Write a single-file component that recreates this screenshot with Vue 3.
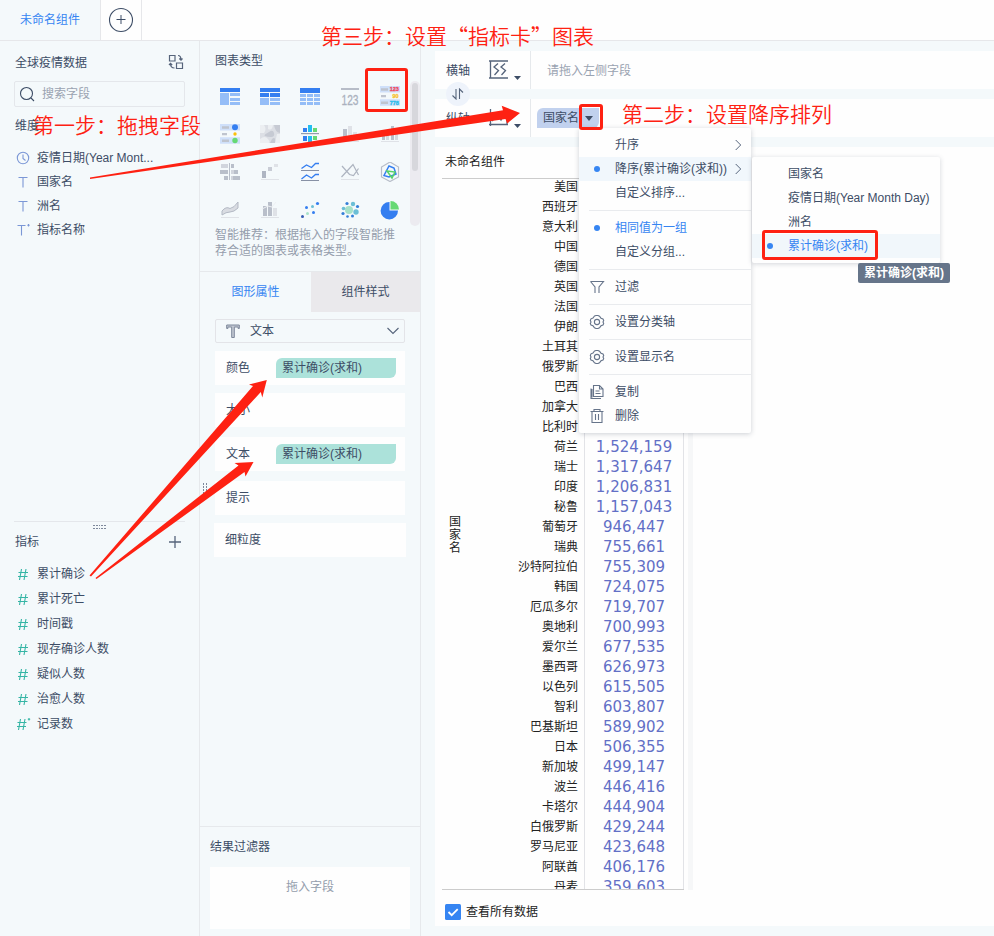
<template>
  <div class="app">
    <header class="tabs">
      <div class="tab">未命名组件</div>
      <div class="tab-add">
        <svg width="26" height="26" viewBox="0 0 26 26" fill="none" stroke="#3d4d66">
          <circle cx="13" cy="13" r="11.5" stroke-width="1.1" />
          <path d="M8.5 12.5h9M13 8v9" />
        </svg>
      </div>
    </header>

    <div class="main">
      <aside class="fields">
        <div class="fields-head">
          <span>全球疫情数据</span>
          <svg width="16" height="16" viewBox="0 0 16 16" fill="none" stroke="#56647b" stroke-width="1.2">
            <path d="M1.5 1.5h5.5v5.5h-5.5zM8.5 9h6v5.5h-6zM10 1.5q3 0 3 4.500M11.300 4.500l1.700 1.700 1.500-1.700M2.500 9.500q0 4.500 4 4.500M1 11l1.500-1.700 1.700 1.700" />
          </svg>
        </div>
        <div class="search">
          <svg width="16" height="16" viewBox="0 0 16 16" fill="none" stroke="#3d4d66" stroke-width="1.1">
            <circle cx="7.500" cy="7.500" r="6" /><path d="M12 12l3 3" />
          </svg>
          <span>搜索字段</span>
        </div>
        <div class="group-title">维度</div>
        <ul class="dims">
          <li v-for="d in dimensions" :key="d.name">
            <svg width="16" height="16" viewBox="0 0 16 16" fill="none" stroke="#7b97d6" stroke-width="1.1">
              <template v-if="d.type === 'date'">
                <circle cx="8" cy="8" r="5.700" /><path d="M8 4.500v4l2.500 2" />
              </template>
              <template v-else-if="d.type === 'text'"><path d="M3.500 3.500h9M8 3.500v10" /></template>
              <template v-else><path d="M2.500 3.500h8M6.500 3.500v10M13.500 2v2.500M12.300 3.200h2.400" /></template>
            </svg>
            <span>{{ d.name }}</span>
          </li>
        </ul>
        <div class="metrics-head">
          <svg class="grip" width="14" height="5" viewBox="0 0 14 5" fill="#7d889b">
            <path d="M0 0h2v1H0zM3 0h2v1H3zM6 0h1v1H6zM8 0h2v1H8zM11 0h2v1h-2zM0 3h2v1H0zM3 3h2v1H3zM6 3h1v1H6zM8 3h2v1H8zM11 3h2v1h-2z" />
          </svg>
          <span>指标</span>
          <svg width="12" height="12" viewBox="0 0 12 12" stroke="#56647b" stroke-width="1.300"><path d="M0 6h12M6 0v12" /></svg>
        </div>
        <ul class="metrics">
          <li v-for="(m, i) in metrics" :key="m">
            <svg width="16" height="16" viewBox="0 0 16 16" fill="none" stroke="#35b5a5" stroke-width="1.100">
              <path v-if="i < 6" d="M6.500 3L4.500 14M11 3L9 14M3.500 6.500h9.500M3 10.500h9.500" />
              <path v-else d="M5.500 3L3.500 14M10 3L8 14M2.500 6.500h9M2 10.500h9M14 2v2.500M12.800 3.200h2.400" />
            </svg>
            <span>{{ m }}</span>
          </li>
        </ul>
      </aside>

      <section class="config">
        <div class="chart-types">
          <div class="title">图表类型</div>
          <div class="type-grid">
            <!-- tables -->
            <svg viewBox="0 0 20 20"><path fill="#347ef0" d="M0 2h20v4H0z" /><path fill="#94bdf7" d="M0 7h9v12H0zM10 7h10v3H10zM10 12h10v3H10zM10 16h10v3H10z" /></svg>
            <svg viewBox="0 0 20 20"><path fill="#347ef0" d="M0 2h20v4H0zM0 7h9v4H0zM10 7h10v4H10z" /><path fill="#94bdf7" d="M0 12h9v7H0zM10 12h10v3H10zM10 16h10v3H10z" /></svg>
            <svg viewBox="0 0 20 20"><path fill="#347ef0" d="M0 2h20v5H0z" /><path fill="#94bdf7" d="M0 8h6v3H0zM7 8h6v3H7zM14 8h6v3h-6zM0 12h6v3H0zM7 12h6v3H7zM14 12h6v3h-6zM0 16h6v3H0zM7 16h6v3H7zM14 16h6v3h-6z" /></svg>
            <svg viewBox="0 0 20 20"><path fill="#b7bdc8" d="M1 2h18v2H1z" /><text x="1.500" y="18.500" font-size="15" fill="#aab1be" textLength="17" lengthAdjust="spacingAndGlyphs" stroke="#aab1be" stroke-width=".3">123</text></svg>
            <svg viewBox="0 0 20 20">
              <path fill="#cfe0fa" d="M0 0h20v6.500H0zM0 13.200h20v6.500H0z" /><path fill="#bfc4ce" d="M1 2.300h7v2.500H1zM1 9h5v2.200H1zM1 15.500h7V18H1z" />
              <g font-size="5.500" font-weight="bold"><text x="9.700" y="5.200" fill="#f0455a" stroke="#f0455a" stroke-width=".3">123</text><text x="12.500" y="11.900" fill="#f8c22e" stroke="#f8c22e" stroke-width=".3">90</text><text x="9.700" y="18.500" fill="#29bdea" stroke="#29bdea" stroke-width=".3">778</text></g>
            </svg>
            <svg viewBox="0 0 20 20">
              <path fill="#cfe0fa" d="M0 0h20v6.500H0zM0 13.200h20v6.500H0z" /><path fill="#bfc4ce" d="M2 2.300h7v2.500H2zM2 9h5v2.200H2zM2 15.500h7V18H2z" />
              <circle cx="15" cy="3.300" r="3" fill="#347ef0" /><circle cx="15" cy="10" r="1.700" fill="#fbbf0c" /><circle cx="15" cy="16.500" r="2.700" fill="#66d974" />
            </svg>
            <svg viewBox="0 0 20 20">
              <path fill="#dcdfe5" d="M0 1h20v18H0z" /><path fill="#eceff2" d="M0 1h4q3 4 0 8H0zM8 1h5q-1 6-5 4zM0 15q5-4 8 0t0 4H0zM17 10h3v9h-5z" />
              <path fill="#c6cad3" d="M14 1h6v8q-5-1-6-8zM9 8q4-3 5 1t-3 4-6-1 4-4zM12 15q4-3 3 4h-5z" />
            </svg>
            <svg viewBox="0 0 20 20"><path fill="#347ef0" d="M3 4h4v4H3zM3 12h4v5H3z" /><path fill="#22bdf0" d="M8 1h4v7H8zM8 12h4v7H8z" /><path fill="#66d974" d="M13 4h4v4h-4zM13 12h4v4h-4z" /><path fill="#929cae" d="M1 9h18v1.200H1z" /></svg>
            <svg viewBox="0 0 20 20"><path fill="#b9bfca" d="M3 5h4v11H3z" /><path fill="#dfe2e7" d="M8 2h4v14H8zM13 8h4v8h-4z" /><path fill="#dfe2e7" d="M1 17h18v1H1z" /></svg>
            <svg viewBox="0 0 20 20"><path fill="#b9bfca" d="M2 6h3v10H2zM11 2h3v14h-3z" /><path fill="#d5d9df" d="M6 9h3v7H6zM15 8h3v8h-3z" /><path fill="#dfe2e7" d="M1 17h18v1H1z" /></svg>
            <svg viewBox="0 0 20 20"><path fill="#d1d5dd" d="M1 2h7v4H1zM11 8h3v4h-3zM11 14h3v4h-3z" /><path fill="#b9bfca" d="M11 2h3v4h-3zM0 8h8v4H0zM14 8h4v4h-4zM4 14h4v4H4zM13 14h7v4h-7zM9 1h1v17H9z" /></svg>
            <svg viewBox="0 0 20 20"><path fill="#aeb5c2" d="M2 9h4v7H2z" /><path fill="#c8ccd5" d="M8 5h4v4H8z" /><path fill="#dfe2e7" d="M14 2h4v3h-4zM1 17h18v1H1z" /></svg>
            <svg viewBox="0 0 20 20" fill="none" stroke="#347ef0" stroke-width="1.300"><path d="M1.500 6.500l5-3.500 5 2.500 4-4H19M1.500 17l5-4 5 3 4-3.500H19" /><path stroke="#8791a5" stroke-width="1" d="M1 8.500h18M1 18.500h18" /></svg>
            <svg viewBox="0 0 20 20" fill="none" stroke="#adb4c0" stroke-width="1.200"><path d="M1.500 15L8 8l5-5.500 5.500 10.500M2 4l7.500 8.500 4 1 5-7" /><path stroke="#dfe2e7" stroke-width="1" d="M1 17.500h18" /></svg>
            <svg viewBox="0 0 20 20" fill="none"><path stroke="#b7bdc8" stroke-width="1.200" d="M10 0l8.500 5v10L10 19.500 1.500 15V5z" /><path stroke="#347ef0" stroke-width="1.500" d="M9 4l5 2 2 6-7 3-5-1.500z" /><path stroke="#57d367" stroke-width="1.500" d="M7 9l8 1-3 6z" /></svg>
            <svg viewBox="0 0 20 20"><path fill="#d9dce2" stroke="#b3b9c4" stroke-width="1" d="M2 11q4-5 8-2.500Q14 8 18 2v6q-4 4-8 4t-8 3z" /><path fill="#dfe2e7" d="M1 17h18v1H1z" /></svg>
            <svg viewBox="0 0 20 20"><path fill="#b9bfca" d="M3 6h4v10H3zM8 2h4v14H8z" /><path fill="#dfe2e7" d="M13 8h4v8h-4zM1 17h18v1H1z" /><path fill="none" stroke="#eef1f4" d="M2 9l6-3 4 1 4-5" /></svg>
            <svg viewBox="0 0 20 20"><g fill="#347ef0"><circle cx="17.500" cy="3.500" r="1.600" /><circle cx="6.500" cy="7.500" r="1.500" /><circle cx="13.500" cy="12.500" r="1.500" /></g><circle cx="12.500" cy="6.500" r="1.500" fill="#6bbfd6" /><circle cx="7.500" cy="13.500" r="1.500" fill="#a7e1c8" /><circle cx="2.500" cy="16.500" r="1.500" fill="#355bb3" /></svg>
            <svg viewBox="0 0 20 20"><circle cx="9" cy="10" r="4" fill="#a7e1c8" /><g fill="#6bbfd6"><circle cx="13" cy="4" r="2.200" /><circle cx="16" cy="12" r="2.700" /><circle cx="3.500" cy="8.500" r="1.800" /></g><g fill="#347fd8"><circle cx="7" cy="3.500" r="1.600" /><circle cx="17.500" cy="6.500" r="1.600" /><circle cx="3" cy="13.500" r="1.600" /><circle cx="7.500" cy="16.500" r="1.300" /><circle cx="12.500" cy="16" r="1.500" /></g></svg>
            <svg viewBox="0 0 20 20"><path fill="#347ef0" d="M9.500 2v8.500H18A8.700 8.700 0 1 1 9.500 2z" /><path fill="#66d974" d="M10.500 1a8.500 8.500 0 0 1 8.500 8.500h-8.500z" /></svg>
          </div>
          <p>智能推荐：根据拖入的字段智能推荐合适的图表或表格类型。</p>
          <div class="type-scroll"><i></i></div>
        </div>

        <div class="prop-tabs">
          <div class="on">图形属性</div>
          <div>组件样式</div>
        </div>
        <div class="props">
          <div class="select">
            <svg width="14" height="14" viewBox="0 0 14 14" fill="#c2c8d2" stroke="#7d889b"><path d="M.7 1h12.600v3.500h-1.200V3H8.300v10.500H5.700V3H1.900v1.500H.7z" /></svg>
            <span>文本</span>
            <svg width="12" height="8" viewBox="0 0 12 8" fill="none" stroke="#56647b" stroke-width="1.100"><path d="M.5 1L6 6.500 11.500 1" /></svg>
          </div>
          <div v-for="p in props" :key="p.label" class="prop" :class="p.cls">
            <span class="prop-label">{{ p.label }}</span>
            <span v-if="p.value" class="pill">{{ p.value }}</span>
          </div>
        </div>
        <div class="filter">
          <div>结果过滤器</div>
          <div class="drop">拖入字段</div>
        </div>
        <svg class="side-grip" width="5" height="11" viewBox="0 0 5 11" fill="#7d889b">
          <path d="M0 0h1v2H0zM3 0h1v2H3zM0 3h1v2H0zM3 3h1v2H3zM0 6h1v2H0zM3 6h1v2H3zM0 9h1v2H0zM3 9h1v2H3z" />
        </svg>
      </section>

      <section class="board">
        <div class="axis">
          <span class="axis-name">横轴</span>
          <svg width="32" height="22" viewBox="0 0 32 22" fill="none" stroke="#56647b" stroke-width="1.300">
            <path d="M0 2h19M1.500 2v17M0 19h19" /><path d="M9 4.500L5 8l4.500 3.500L5.500 16M16 4.500L12 8l4.500 3.500-4 4.500" />
            <path d="M25 17h7l-3.500 4z" fill="#3d4d66" stroke="none" />
          </svg>
          <div class="axis-drop"><span class="hint">请拖入左侧字段</span></div>
        </div>
        <div class="axis">
          <span class="axis-name">纵轴</span>
          <svg width="32" height="22" viewBox="0 0 32 22" fill="none" stroke="#56647b" stroke-width="1.300">
            <path d="M1.500 2v17M0 17.500h19M18 4v14M3 14l5-6 4 5 5-9" />
            <path d="M25 17h7l-3.500 4z" fill="#3d4d66" stroke="none" />
          </svg>
          <div class="axis-drop">
            <span class="dim-pill">国家名<i></i></span>
          </div>
        </div>
        <div class="swap">
          <svg width="12" height="12" viewBox="0 0 12 12" fill="none" stroke="#56647b" stroke-width="1.100"><path d="M4 1v10L.5 7.500M7.500 11V1L11 4.500" /></svg>
        </div>
        <div class="card">
          <div class="card-title">未命名组件</div>
          <div class="table">
            <div class="dim-col"><span>国家名</span></div>
            <div class="names">
              <div v-for="r in rows" :key="r[0]">{{ r[0] }}</div>
            </div>
            <div class="values">
              <div v-for="r in rows" :key="r[0]">{{ r[1] }}</div>
            </div>
          </div>
          <i class="table-scroll"></i>
          <div class="show-all">
            <svg width="16" height="16" viewBox="0 0 16 16"><rect width="16" height="16" rx="1.500" fill="#3685f2" /><path d="M3.500 8l3.200 3.200 6-6" fill="none" stroke="#fff" stroke-width="1.800" /></svg>
            <span>查看所有数据</span>
          </div>
        </div>
      </section>
    </div>

    <div class="menu">
      <div v-for="(g, gi) in menu" :key="gi" class="menu-group">
        <div v-for="item in g" :key="item.label" class="menu-item" :class="{ hover: item.hover, picked: item.picked }">
          <span class="menu-icon">
            <i v-if="item.dot" class="dot"></i>
            <svg v-if="item.icon" width="16" height="16" viewBox="0 0 16 16" fill="none" stroke="#66748a" stroke-width="1.100">
              <path v-if="item.icon === 'filter'" d="M1.500 2.500h13L10 8v6M1.500 2.500L6 8v6" />
              <template v-if="item.icon === 'gear'">
                <path d="M5.500 2L7 1.500h2l1.500.7 1.500 2 2 .8.700 1.500-.7 1.500.7 1.500-.7 1.500-2 .8-1.500 2-1.500.7H7l-1.500-.7-1.500-2-2-.8-.7-1.500.7-1.500-.7-1.500L2 4.800 4 4z" />
                <circle cx="8" cy="8" r="2.600" />
              </template>
              <path v-if="item.icon === 'copy'" d="M4.500 1.500h6l3.500 3.500v7.500H4.500zM10.500 1.500V5H14M2 4.500v10h10M3 5v8.500M6.500 7h4M6.500 9.500h5" />
              <path v-if="item.icon === 'trash'" d="M1.500 3.500h13M5 3.500V1.500h6v2M3 3.500v11h10v-11M6.500 6v6M9.500 6v6" />
            </svg>
          </span>
          <span>{{ item.label }}</span>
          <svg v-if="item.sub" class="chev" width="7" height="12" viewBox="0 0 7 12" fill="none" stroke="#56647b"><path d="M.7 1l5 5-5 5" /></svg>
        </div>
      </div>
    </div>

    <div class="submenu">
      <div v-for="s in sortFields" :key="s">{{ s }}</div>
      <div class="active"><i class="dot"></i>累计确诊(求和)</div>
    </div>
    <div class="tooltip">累计确诊(求和)</div>

    <!-- step annotations -->
    <svg class="arrows" width="994" height="936" viewBox="0 0 994 936" fill="#fe2112">
      <path d="M90 177.500L503 110.300l-1.300-4.600L520 113l-12.800 10.500-1.700-4.500L90 179z" />
      <path d="M89.500 575.500L253 386l-4-1.500 17.800-4.500-4.500 17.500-1.500-5.500L91 576.500z" />
      <path d="M95.500 578L238.500 465.500l-4-2.500 19-1-8 14.500-1-4.500L96.500 579z" />
    </svg>
    <div class="mark mark-type"></div>
    <div class="mark mark-caret"></div>
    <div class="mark mark-sort"></div>
    <div class="step step1">第一步：拖拽字段</div>
    <div class="step step2">第二步：设置降序排列</div>
    <div class="step step3">第三步：设置“指标卡”图表</div>
  </div>
</template>

<script setup>
const dimensions = [
  { name: '疫情日期(Year Mont...', type: 'date' },
  { name: '国家名', type: 'text' },
  { name: '洲名', type: 'text' },
  { name: '指标名称', type: 'calc' }
]

const metrics = ['累计确诊', '累计死亡', '时间戳', '现存确诊人数', '疑似人数', '治愈人数', '记录数']

const props = [
  { label: '颜色', value: '累计确诊(求和)', cls: 'color' },
  { label: '大小', cls: 'size' },
  { label: '文本', value: '累计确诊(求和)', cls: 'text' },
  { label: '提示', cls: 'tip' },
  { label: '细粒度', cls: 'grain' }
]

const menu = [
  [
    { label: '升序', sub: true },
    { label: '降序(累计确诊(求和))', dot: true, sub: true, hover: true },
    { label: '自定义排序...' }
  ],
  [
    { label: '相同值为一组', dot: true, picked: true },
    { label: '自定义分组...' }
  ],
  [{ label: '过滤', icon: 'filter' }],
  [{ label: '设置分类轴', icon: 'gear' }],
  [{ label: '设置显示名', icon: 'gear' }],
  [
    { label: '复制', icon: 'copy' },
    { label: '删除', icon: 'trash' }
  ]
]

const sortFields = ['国家名', '疫情日期(Year Month Day)', '洲名']

const rows = [
  ['美国', ''],
  ['西班牙', ''],
  ['意大利', ''],
  ['中国', ''],
  ['德国', ''],
  ['英国', ''],
  ['法国', ''],
  ['伊朗', ''],
  ['土耳其', ''],
  ['俄罗斯', ''],
  ['巴西', ''],
  ['加拿大', ''],
  ['比利时', ''],
  ['荷兰', '1,524,159'],
  ['瑞士', '1,317,647'],
  ['印度', '1,206,831'],
  ['秘鲁', '1,157,043'],
  ['葡萄牙', '946,447'],
  ['瑞典', '755,661'],
  ['沙特阿拉伯', '755,309'],
  ['韩国', '724,075'],
  ['厄瓜多尔', '719,707'],
  ['奥地利', '700,993'],
  ['爱尔兰', '677,535'],
  ['墨西哥', '626,973'],
  ['以色列', '615,505'],
  ['智利', '603,807'],
  ['巴基斯坦', '589,902'],
  ['日本', '506,355'],
  ['新加坡', '499,147'],
  ['波兰', '446,416'],
  ['卡塔尔', '444,904'],
  ['白俄罗斯', '429,244'],
  ['罗马尼亚', '423,648'],
  ['阿联酋', '406,176'],
  ['丹麦', '359,603']
]
</script>

<style>
body {
  margin: 0;
}
</style>

<style scoped>
.app {
  position: relative;
  width: 994px;
  height: 936px;
  overflow: hidden;
  display: flex;
  flex-direction: column;
  background: #fff;
  color: #3d4d66;
  font-family: "Liberation Sans", "Noto Sans CJK SC", sans-serif;
  font-size: 12px;
  line-height: 16px;
}
.app * {
  box-sizing: border-box;
}
svg {
  display: block;
  flex: none;
}
ul {
  list-style: none;
  margin: 0;
  padding: 0;
}
.tabs {
  display: flex;
  height: 41px;
  flex: none;
  border-bottom: 1px solid #e6e7ea;
  background: #fefefe;
}
.tab {
  width: 101px;
  line-height: 40px;
  text-align: center;
  color: #3685f2;
  background: #f4f9fb;
  border-right: 1px solid #e6e7ea;
}
.tab-add {
  width: 41px;
  display: flex;
  align-items: center;
  justify-content: center;
  border-right: 1px solid #e6e7ea;
}
.main {
  flex: 1;
  display: flex;
  min-height: 0;
  background: #f4f9fb;
}

/* fields */
.fields {
  width: 200px;
  flex: none;
  border-right: 1px solid #e6e9ec;
  padding: 12px 14px 0;
}
.fields-head {
  height: 18px;
  display: flex;
  justify-content: space-between;
  align-items: center;
  padding: 0 1px;
}
.fields-head span {
  padding-top: 2px;
}
.search {
  display: flex;
  align-items: center;
  gap: 7px;
  height: 26px;
  margin-top: 10px;
  padding-left: 4px;
  border: 1px solid #e4e7eb;
  border-radius: 2px;
  color: #9aa3b1;
}
.group-title {
  margin-top: 11px;
  padding-left: 1px;
}
.dims {
  height: 375px;
  padding-top: 12px;
}
.dims li,
.metrics li {
  display: flex;
  align-items: center;
  gap: 6px;
  height: 24px;
  padding-left: 1px;
}
.metrics-head {
  position: relative;
  height: 40px;
  display: flex;
  align-items: center;
  justify-content: space-between;
  margin-top: 12px;
  padding: 0 4px 0 1px;
  border-top: 1px solid #e4e7eb;
}
.grip {
  position: absolute;
  left: 79px;
  top: 3px;
}
.metrics li {
  height: 25px;
}

/* chart config */
.config {
  position: relative;
  width: 221px;
  flex: none;
  display: flex;
  flex-direction: column;
  border-right: 1px solid #e6e9ec;
}
.chart-types {
  position: relative;
  height: 231px;
  flex: none;
  padding: 12px 15px 0;
  border-bottom: 1px solid #e6e9ec;
}
.type-grid {
  display: grid;
  grid-template-columns: repeat(5, 20px);
  grid-auto-rows: 20px;
  gap: 18px 20px;
  padding: 17px 0 0 5px;
}
.chart-types p {
  margin: 7px 0 0;
  width: 182px;
  color: #949dac;
}
.type-scroll {
  position: absolute;
  left: 210px;
  top: 40px;
  width: 10px;
  height: 145px;
  padding: 2px;
  border-radius: 5px;
  background: #ecebf0;
}
.type-scroll i {
  display: block;
  height: 88px;
  border-radius: 3px;
  background: #d7d7dc;
}
.prop-tabs {
  display: flex;
  height: 40px;
  flex: none;
}
.prop-tabs div {
  flex: 1;
  line-height: 40px;
  text-align: center;
  background: #eae9ec;
}
.prop-tabs .on {
  flex: none;
  width: 111px;
  color: #3685f2;
  background: #f4f9fb;
}
.props {
  flex: 1;
  padding: 7px 15px 0;
}
.select {
  display: flex;
  align-items: center;
  height: 24px;
  padding: 0 5px 0 10px;
  border: 1px solid #e3e4e8;
  border-radius: 2px;
}
.select span {
  flex: 1;
  padding-left: 10px;
}
.prop {
  display: flex;
  align-items: center;
  height: 34px;
  margin-top: 10px;
  padding-left: 11px;
  background: #fefefe;
}
.prop.color,
.prop.size,
.prop.grain {
  margin-top: 8px;
}
.prop.grain {
  margin-left: -1px;
  margin-right: -1px;
}
.prop-label {
  width: 50px;
}
.pill {
  width: 120px;
  height: 20px;
  line-height: 20px;
  padding-left: 6px;
  border-radius: 6px 0 6px 0;
  background: #ace2da;
}
.filter {
  height: 110px;
  padding: 12px 10px 0;
  border-top: 1px solid #e6e9ec;
}
.drop {
  height: 62px;
  margin-top: 12px;
  padding-top: 12px;
  text-align: center;
  color: #949dac;
  background: #fefefe;
}
.side-grip {
  position: absolute;
  left: 3px;
  top: 442px;
}

/* board */
.board {
  position: relative;
  flex: 1;
  min-width: 0;
  display: flex;
  flex-direction: column;
  gap: 10px;
  padding: 10px 0 10px 14px;
}
.axis {
  display: flex;
  align-items: center;
  height: 38px;
  flex: none;
  padding-left: 11px;
  background: #fefefe;
}
.axis-name {
  width: 43px;
  padding-top: 2px;
}
.axis-drop {
  display: flex;
  align-items: center;
  align-self: stretch;
  margin-left: 9px;
  padding-left: 6px;
  border-left: 1px solid #e6e9ec;
}
.hint {
  padding: 1px 0 0 10px;
  color: #9aa3b1;
}
.dim-pill {
  display: flex;
  align-items: center;
  justify-content: space-between;
  width: 62px;
  height: 20px;
  padding: 0 6px;
  border-radius: 6px 0 6px 0;
  background: #c1d1ee;
}
.dim-pill i {
  border: 4px solid transparent;
  border-top: 5px solid #3d4d66;
  border-bottom: 0;
}
.swap {
  position: absolute;
  left: 25px;
  top: 41px;
  width: 24px;
  height: 24px;
  display: flex;
  align-items: center;
  justify-content: center;
  border-radius: 50%;
  background: #eef3fb;
}
.card {
  position: relative;
  flex: 1;
  padding: 6px 0 0 7px;
  background: #fefefe;
  min-height: 0;
}
.card-title {
  height: 25px;
  padding: 1px 0 0 3px;
  color: #222;
}
.table {
  display: flex;
  width: 242px;
  height: 712px;
  overflow: hidden;
  border-top: 1px solid #ccc;
  border-bottom: 1px solid #ccc;
  color: #222;
}
.dim-col {
  width: 26px;
  display: flex;
  align-items: center;
  justify-content: center;
}
.dim-col span {
  width: 12px;
  padding-top: 3px;
  line-height: 13px;
  word-break: break-all;
}
.names {
  flex: 1;
  margin-top: -2px;
  text-align: right;
  padding-right: 6px;
  line-height: 20px;
  white-space: nowrap;
}
.names div,
.values div {
  height: 20px;
}
.values {
  width: 100px;
  margin-top: -2px;
  border-left: 1px solid #e2e3e7;
  border-right: 1px solid #e2e3e7;
  height: 730px;
  text-align: center;
  color: #626fc6;
  font-family: "DejaVu Sans", sans-serif;
  font-size: 15px;
  line-height: 20px;
}
.table-scroll {
  position: absolute;
  left: 253px;
  top: 31px;
  width: 5px;
  height: 712px;
  background: #f6f7f8;
}
.show-all {
  display: flex;
  align-items: center;
  gap: 5px;
  padding: 14px 0 0 3px;
  color: #222;
}

/* menus */
.menu {
  position: absolute;
  left: 579px;
  top: 128px;
  width: 172px;
  height: 305px;
  background: #fefefe;
  border-radius: 2px;
  box-shadow: 0 1px 5px rgba(60, 70, 90, 0.25);
}
.menu-group {
  position: relative;
  padding: 5px 0;
}
.menu-group + .menu-group {
  margin-top: 1px;
}
.menu-group + .menu-group::before {
  content: "";
  position: absolute;
  left: 10px;
  right: 0;
  top: -1px;
  height: 1px;
  background: #e9ebee;
}
.menu-item {
  display: flex;
  align-items: center;
  height: 24px;
  padding-left: 10px;
  white-space: nowrap;
}
.menu-item.hover {
  background: #f1f7fc;
}
.menu-item.picked {
  color: #3685f2;
}
.menu-icon {
  width: 26px;
  flex: none;
}
.dot {
  display: block;
  width: 6px;
  height: 6px;
  margin-left: 5px;
  border-radius: 50%;
  background: #3685f2;
}
.chev {
  margin-left: auto;
  margin-right: 9px;
}
.submenu {
  position: absolute;
  left: 752px;
  top: 157px;
  width: 188px;
  height: 106px;
  padding: 5px 0;
  background: #fefefe;
  border-radius: 2px;
  box-shadow: 0 1px 5px rgba(60, 70, 90, 0.22);
}
.submenu div {
  height: 24px;
  line-height: 24px;
  padding-left: 36px;
}
.submenu .active {
  display: flex;
  align-items: center;
  padding-left: 10px;
  color: #3685f2;
  background: #f1f7fb;
}
.submenu .dot {
  margin: 0 15px 0 5px;
}
.tooltip {
  position: absolute;
  left: 858px;
  top: 263px;
  width: 92px;
  height: 20px;
  line-height: 20px;
  text-align: center;
  font-weight: bold;
  color: #fff;
  background: #66758a;
  border-radius: 2px;
}

/* annotations */
.arrows {
  position: absolute;
  left: 0;
  top: 0;
}
.mark {
  position: absolute;
  border: 3px solid #fe2112;
  border-radius: 3px;
}
.mark-type {
  left: 365px;
  top: 68px;
  width: 43px;
  height: 44px;
}
.mark-caret {
  left: 579px;
  top: 104px;
  width: 24px;
  height: 26px;
}
.mark-sort {
  left: 762px;
  top: 230px;
  width: 116px;
  height: 30px;
}
.step {
  position: absolute;
  color: #fe2112;
  font-family: "Noto Sans CJK SC", sans-serif;
  font-size: 21px;
  font-weight: 350;
  line-height: 30px;
  white-space: nowrap;
}
.step1 {
  left: 33px;
  top: 109px;
}
.step2 {
  left: 622px;
  top: 98px;
}
.step3 {
  left: 321px;
  top: 20px;
}
</style>
